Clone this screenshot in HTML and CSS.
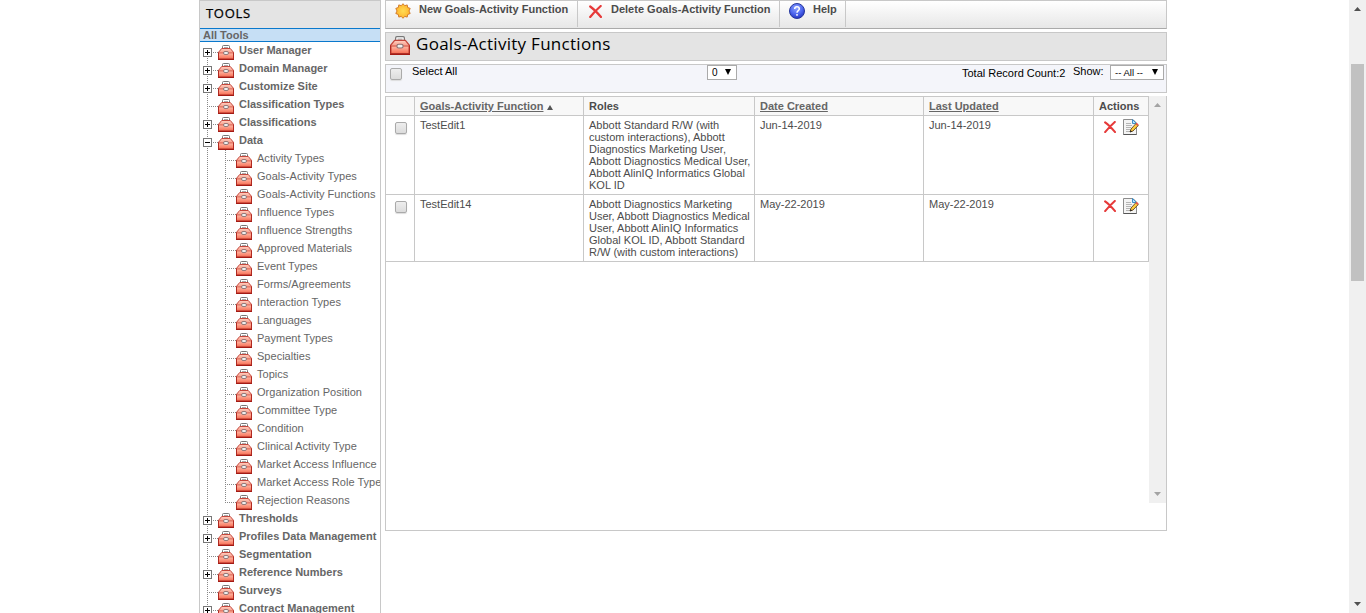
FILE: index.html
```html
<!DOCTYPE html>
<html lang="en">
<head>
<meta charset="utf-8">
<title>Goals-Activity Functions</title>
<link rel="stylesheet" href="styles.css">
</head>
<body>
<svg class="defs" aria-hidden="true">
  <defs>
    <linearGradient id="red" x1="0" y1="0" x2="0" y2="1"><stop offset="0" stop-color="#ffd0c2"/><stop offset=".4" stop-color="#f99e8b"/><stop offset=".5" stop-color="#ffb09c"/><stop offset="1" stop-color="#f76c52"/></linearGradient>
    <radialGradient id="blue" cx=".45" cy=".3" r=".7"><stop offset="0" stop-color="#8ea4ff"/><stop offset=".6" stop-color="#4d66ee"/><stop offset="1" stop-color="#2434c0"/></radialGradient>
    <radialGradient id="sun"><stop offset="0" stop-color="#ffdc55"/><stop offset="1" stop-color="#ffb52c"/></radialGradient>
    <symbol id="box" viewBox="0 0 16 15">
      <path d="M4.500 4V1.500Q4.500.5 5.500.5h5q1 0 1 1V4" fill="#fff" stroke="#777"/>
      <path d="M6 2.500h4" stroke="#aaa"/>
      <path d="M.5 14V7.300L3.700 3.500h8.600l3.200 3.800V14z" fill="url(#red)" stroke="#c4473c"/>
      <path d="M1 7.900h14" stroke="#d0584a" stroke-width=".8"/>
      <path d="M0 14.400h16" stroke="#a31a14" stroke-width="1.200"/>
      <path d="M.5 7.500V14M15.500 7.500V14" stroke="#b02a22"/>
      <rect x="5.500" y="6.500" width="5" height="3" rx="1.500" fill="#eee" stroke="#8a7070" stroke-width=".9"/>
    </symbol>
    <symbol id="cross" viewBox="0 0 13 13"><path d="M1.200 1.500Q6 5 12 12M11.700 1Q6 6 1.200 12" fill="none" stroke="#e63a3a" stroke-width="2.200" stroke-linecap="round"/></symbol>
    <symbol id="edit" viewBox="0 0 16 16">
      <path d="M.5.500h9.500l3.500 3.500v11.500H.5z" fill="#f4f4f4" stroke="#8c8c8c"/>
      <path d="M.5 15.500h13" stroke="#555"/>
      <path d="M9.500.500v4h4z" fill="#b9e2fb" stroke="#3f8fc8"/>
      <path d="M3 4.500h5M3 6.500h6M3 8.500h5M3 10.500h4M3 12.500h4" stroke="#b5b5b5"/>
      <path d="M7 13l1-3 5-5.500 2.300 2L10 12z" fill="#ffcb3d" stroke="#5e4520" stroke-width=".9"/>
      <path d="M12.500 5l1.200-1.200 2 1.800-1.200 1.300z" fill="#e8544a"/>
      <path d="M7 13.300l.6-2 1.600 1.300z" fill="#222"/>
    </symbol>
  </defs>
</svg>
<div class="page">
  <aside class="sidebar">
    <h2 class="side-title">TOOLS</h2>
    <div class="all">All Tools</div>
    <ul class="tree">
      <li class="node plus"><svg class="ico"><use href="#box"/></svg>User Manager</li>
      <li class="node plus"><svg class="ico"><use href="#box"/></svg>Domain Manager</li>
      <li class="node plus"><svg class="ico"><use href="#box"/></svg>Customize Site</li>
      <li class="node"><svg class="ico"><use href="#box"/></svg>Classification Types</li>
      <li class="node plus"><svg class="ico"><use href="#box"/></svg>Classifications</li>
      <li class="node minus"><svg class="ico"><use href="#box"/></svg>Data</li>
      <li>
        <ul class="sub">
          <li class="node"><svg class="ico"><use href="#box"/></svg>Activity Types</li>
          <li class="node"><svg class="ico"><use href="#box"/></svg>Goals-Activity Types</li>
          <li class="node"><svg class="ico"><use href="#box"/></svg>Goals-Activity Functions</li>
          <li class="node"><svg class="ico"><use href="#box"/></svg>Influence Types</li>
          <li class="node"><svg class="ico"><use href="#box"/></svg>Influence Strengths</li>
          <li class="node"><svg class="ico"><use href="#box"/></svg>Approved Materials</li>
          <li class="node"><svg class="ico"><use href="#box"/></svg>Event Types</li>
          <li class="node"><svg class="ico"><use href="#box"/></svg>Forms/Agreements</li>
          <li class="node"><svg class="ico"><use href="#box"/></svg>Interaction Types</li>
          <li class="node"><svg class="ico"><use href="#box"/></svg>Languages</li>
          <li class="node"><svg class="ico"><use href="#box"/></svg>Payment Types</li>
          <li class="node"><svg class="ico"><use href="#box"/></svg>Specialties</li>
          <li class="node"><svg class="ico"><use href="#box"/></svg>Topics</li>
          <li class="node"><svg class="ico"><use href="#box"/></svg>Organization Position</li>
          <li class="node"><svg class="ico"><use href="#box"/></svg>Committee Type</li>
          <li class="node"><svg class="ico"><use href="#box"/></svg>Condition</li>
          <li class="node"><svg class="ico"><use href="#box"/></svg>Clinical Activity Type</li>
          <li class="node"><svg class="ico"><use href="#box"/></svg>Market Access Influence</li>
          <li class="node"><svg class="ico"><use href="#box"/></svg>Market Access Role Type</li>
          <li class="node"><svg class="ico"><use href="#box"/></svg>Rejection Reasons</li>
        </ul>
      </li>
      <li class="node plus"><svg class="ico"><use href="#box"/></svg>Thresholds</li>
      <li class="node plus"><svg class="ico"><use href="#box"/></svg>Profiles Data Management</li>
      <li class="node"><svg class="ico"><use href="#box"/></svg>Segmentation</li>
      <li class="node plus"><svg class="ico"><use href="#box"/></svg>Reference Numbers</li>
      <li class="node"><svg class="ico"><use href="#box"/></svg>Surveys</li>
      <li class="node plus"><svg class="ico"><use href="#box"/></svg>Contract Management</li>
    </ul>
  </aside>
  <main class="main">
    <div class="toolbar">
      <div class="tool tool-new"><svg class="t-sun" viewBox="0 0 16 16"><path d="M8 .7l1.700 2 2.500-.8.500 2.600 2.500.9L14 8l1.200 2.500-2.500 1-.5 2.600-2.500-.7L8 15.300l-1.700-1.900-2.500.7-.5-2.600-2.500-1L2 8 .8 5.400l2.500-.9.500-2.600 2.500.8z" fill="url(#sun)" stroke="#cf7420" stroke-width=".9"/></svg>New Goals-Activity Function</div>
      <div class="tool tool-del"><svg class="t-cross"><use href="#cross"/></svg>Delete Goals-Activity Function</div>
      <div class="tool tool-help"><svg class="t-help" viewBox="0 0 16 16"><circle cx="8" cy="8" r="7.500" fill="url(#blue)" stroke="#27389c"/><path d="M5.700 6Q5.700 3.800 8 3.800T10.300 6C10.300 7.500 8 7.700 8 9.700M8 11v1.700" fill="none" stroke="#fff" stroke-width="1.500"/></svg>Help</div>
    </div>
    <div class="heading"><svg class="h-box" viewBox="0 0 16 15" preserveAspectRatio="none"><use href="#box" width="16" height="15"/></svg><h1>Goals-Activity Functions</h1></div>
    <div class="filter">
      <span class="check"></span><span class="sel-all">Select All</span>
      <span class="select pager">0<i class="tri"></i></span>
      <span class="count">Total Record Count:2</span><span class="show">Show:</span>
      <span class="select all-sel">-- All --<i class="tri"></i></span>
    </div>
    <div class="panel">
      <div class="grid">
        <div class="cell head"></div>
        <div class="cell head"><span class="link">Goals-Activity Function</span><i class="sort"></i></div>
        <div class="cell head">Roles</div>
        <div class="cell head"><span class="link">Date Created</span></div>
        <div class="cell head"><span class="link">Last Updated</span></div>
        <div class="cell head">Actions</div>

        <div class="cell pick"><span class="check"></span></div>
        <div class="cell">TestEdit1</div>
        <div class="cell">Abbott Standard R/W (with<br>custom interactions), Abbott<br>Diagnostics Marketing User,<br>Abbott Diagnostics Medical User,<br>Abbott AlinIQ Informatics Global<br>KOL ID</div>
        <div class="cell">Jun-14-2019</div>
        <div class="cell">Jun-14-2019</div>
        <div class="cell acts"><svg class="a-cross"><use href="#cross"/></svg><svg class="a-edit"><use href="#edit"/></svg></div>

        <div class="cell pick"><span class="check"></span></div>
        <div class="cell">TestEdit14</div>
        <div class="cell">Abbott Diagnostics Marketing<br>User, Abbott Diagnostics Medical<br>User, Abbott AlinIQ Informatics<br>Global KOL ID, Abbott Standard<br>R/W (with custom interactions)</div>
        <div class="cell">May-22-2019</div>
        <div class="cell">May-22-2019</div>
        <div class="cell acts"><svg class="a-cross"><use href="#cross"/></svg><svg class="a-edit"><use href="#edit"/></svg></div>
      </div>
      <div class="scroll"><i class="arrow up"></i><i class="arrow down"></i></div>
    </div>
  </main>
  <div class="page-scroll"><i class="arrow up"></i><div class="thumb"></div><i class="arrow down"></i></div>
</div>
</body>
</html>
```
FILE: styles.css
```css
*, *::before { box-sizing: border-box; }
body { margin: 0; background: #fff; font: 11px/12px "Liberation Sans", Arial, sans-serif; color: #4c4c4c; overflow: hidden; }
.defs { position: absolute; width: 0; height: 0; }
.page { display: flex; width: 1366px; height: 613px; padding-left: 199px; overflow: hidden; }
svg { display: block; flex: none; }

/* sidebar */
.sidebar { width: 182px; height: 613px; border: 1px solid #c8c8c8; border-width: 0 1px; overflow: hidden; flex: none; }
.side-title { margin: 0; height: 28px; padding: 3px 0 0 6px; background: #e4e4e4; border-top: 1px solid #c8c8c8; color: #000; font: 13px/18px "Open Sans", sans-serif; letter-spacing: .7px; -webkit-text-stroke: .25px #000; }
.all { height: 14px; padding-left: 3px; background: #c6dff5; border: 1px solid #0a78cc; border-width: 1px 0; font-weight: bold; line-height: 13px; color: #666; }
.tree, .sub { list-style: none; margin: 0; padding: 0; }
.tree { font-weight: bold; color: #666; letter-spacing: -.01px; background: repeating-linear-gradient(#888 0 1px, transparent 1px 2px) 7px 10px / 1px 100% no-repeat; }
.sub { font-weight: normal; letter-spacing: .02px; padding-left: 18px; background: repeating-linear-gradient(#888 0 1px, transparent 1px 2px) 25px -8px / 1px 100% no-repeat; }
.node { display: flex; height: 18px; line-height: 17px; white-space: nowrap; align-items: flex-start; background: repeating-linear-gradient(90deg, #888 0 1px, transparent 1px 2px) 7px 10px / 11px 1px no-repeat; }
.node::before { content: ""; width: 9px; height: 9px; margin: 6px 6px 0 3px; flex: none; }
.plus::before, .minus::before { border: 1px solid #777; background: linear-gradient(#000, #000) 1px 3px / 5px 1px no-repeat, linear-gradient(#000, #000) 3px 1px / 1px 5px no-repeat, #fff; }
.minus::before { background: linear-gradient(#000, #000) 1px 3px / 5px 1px no-repeat, #fff; }
.ico { width: 16px; height: 15px; margin: 3px 5px 0 0; }

/* main column */
.main { width: 782px; margin-left: 4px; flex: none; }
.toolbar { display: flex; height: 29px; border: 1px solid #c8c8c8; border-bottom-color: #aaa; background: linear-gradient(#fff, #f4f4f4 45%, #e7e7e7); }
.tool { display: flex; height: 26px; border-right: 1px solid #c8c8c8; font-weight: bold; line-height: 17px; white-space: nowrap; }
.tool-new { width: 192px; padding-left: 9px; }
.tool-del { width: 202px; padding-left: 11px; }
.tool-help { width: 66px; padding-left: 9px; }
.t-sun { width: 16px; height: 16px; margin: 2px 8px 0 0; }
.t-cross { width: 13px; height: 13px; margin: 4px 9px 0 0; }
.t-help { width: 16px; height: 16px; margin: 2px 8px 0 0; }
.heading { display: flex; height: 29px; margin-top: 3px; border: 1px solid #c8c8c8; background: #e4e4e4; }
.h-box { width: 20px; height: 19px; margin: 3px 6px 0 4px; }
h1 { margin: 0; color: #000; font: 17px/22px "Open Sans", sans-serif; letter-spacing: .28px; white-space: nowrap; }
.filter { display: flex; align-items: flex-start; height: 29px; margin-top: 3px; border: 1px solid #c8c8c8; background: #f4f5fa; color: #000; white-space: nowrap; }
.check { width: 12px; height: 12px; border: 1px solid #aaa; border-radius: 2px; background: linear-gradient(#eee, #dcdcdc); box-shadow: 0 1px 1px #ddd; flex: none; }
.filter .check { margin: 3px 10px 0 4px; }
.sel-all { width: 295px; }
.select { display: flex; align-items: center; justify-content: space-between; height: 15px; padding: 0 5px 0 4px; border: 1px solid #aaa; background: #fff; font-size: 10px; }
.tri { margin-top: -1px; border: 3.500px solid transparent; border-top: 6px solid #000; border-bottom: 0; }
.pager { width: 30px; }
.count { margin: 2px 8px 0 225px; width: 103px; }
.show { width: 37px; }
.all-sel { width: 54px; font-size: 9.500px; }

/* records */
.panel { display: flex; justify-content: space-between; height: 435px; margin-top: 3px; border: 1px solid #c8c8c8; }
.grid { display: grid; grid-template-columns: 29px 169px 171px 169px 170px 55px; grid-template-rows: 19px 79px 67px; align-content: start; }
.cell { padding: 3px 0 0 5px; border: 1px solid #c8c8c8; border-width: 0 1px 1px 0; white-space: nowrap; }
.head { background: #f8f8f8; font-weight: bold; }
.link { color: #666; text-decoration: underline; }
.sort { display: inline-block; margin-left: 4px; border: 3px solid transparent; border-bottom: 5px solid #555; border-top: 0; }
.pick { padding: 6px 0 0 9px; }
.pick .check { display: block; }
.acts { display: flex; gap: 7px; padding: 3px 0 0 10px; }
.a-cross { width: 12px; height: 12px; margin-top: 2px; }
.a-edit { width: 16px; height: 16px; }

/* scroll bars */
.scroll { display: flex; flex-direction: column; justify-content: space-between; align-items: center; width: 17px; height: 407px; margin-top: -1px; padding: 7px 0 7px; background: #f0f0f0; }
.arrow { width: 7px; height: 4px; background: #a3a3a3; }
.up { clip-path: polygon(50% 0, 100% 100%, 0 100%); }
.down { clip-path: polygon(0 0, 100% 0, 50% 100%); }
.page-scroll { display: flex; flex-direction: column; align-items: center; width: 17px; height: 613px; margin-left: auto; padding: 7px 0; background: #f0f0f0; }
.page-scroll .arrow { background: #505050; }
.thumb { width: 13px; height: 217px; margin: 53px 0 auto; background: #c1c1c1; }
```
